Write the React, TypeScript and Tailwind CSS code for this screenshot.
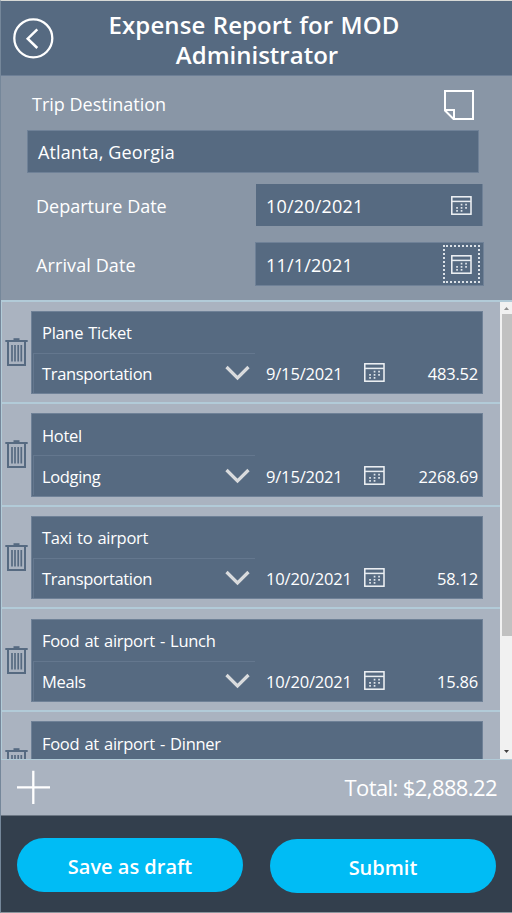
import type { ReactNode } from "react";

type Expense = {
  title: string;
  details?: { category: string; date: string; amount: string };
};

const expenses: Expense[] = [
  { title: "Plane Ticket", details: { category: "Transportation", date: "9/15/2021", amount: "483.52" } },
  { title: "Hotel", details: { category: "Lodging", date: "9/15/2021", amount: "2268.69" } },
  { title: "Taxi to airport", details: { category: "Transportation", date: "10/20/2021", amount: "58.12" } },
  { title: "Food at airport - Lunch", details: { category: "Meals", date: "10/20/2021", amount: "15.86" } },
  { title: "Food at airport - Dinner" },
];

function CalendarIcon() {
  return (
    <svg width="21" height="19" viewBox="0 0 21 19" fill="none" className="block shrink-0">
      <rect x="0.8" y="0.8" width="19.2" height="17.4" stroke="#f2f5f7" strokeWidth="1.5" />
      <path d="M1 5.4H20" stroke="#e9edf1" strokeWidth="1.5" />
      <path
        d="M9.7 8.6h1.7M14.2 8.6h1.7M5.2 11.8h1.7M9.7 11.8h1.7M14.2 11.8h1.7M5.2 14.8h1.7M9.7 14.8h1.7"
        stroke="#dfe5ea"
        strokeWidth="1.7"
      />
    </svg>
  );
}

function TrashIcon() {
  return (
    <svg width="23" height="29" viewBox="0 0 23 29" fill="none" stroke="#566a81" className="block">
      <path d="M8.5 1.2H14.5" strokeWidth="2" />
      <path d="M0.3 3H22.7" strokeWidth="2" />
      <path d="M3 4V27H20V4" strokeWidth="2" />
      <path d="M7 7V23.5M10 7V23.5M13.2 7V23.5M16.3 7V23.5" strokeWidth="1.7" />
    </svg>
  );
}

function DateField({ value, children }: { value: string; children: ReactNode }) {
  return (
    <>
      <span className="pt-[2px] text-[18px] tracking-[0.2px]">{value}</span>
      {children}
    </>
  );
}

function ExpenseRow({ item }: { item: Expense }) {
  return (
    <div className="flex h-[102.7px] shrink-0 border-b-2 border-[#b2cbd8] pt-[9.2px] pl-[3px]">
      <div className="w-[26px] pt-[27px]">
        <TrashIcon />
      </div>
      <div className="flex h-[83.3px] w-[452px] flex-col border border-[#6f8197] bg-[#566a81] text-[16.5px] text-white">
        <div className="flex h-[41px] items-center pt-[2.4px] pl-[10px] tracking-[-0.3px] [word-spacing:1.2px]">
          {item.title}
        </div>
        {item.details && (
          <div className="flex h-[40px]">
            <div className="ml-px flex w-[222px] items-center border-t border-l border-[#64778e] pl-[8px]">
              <span className="w-[184px] pt-[2.5px] tracking-[-0.35px]">{item.details.category}</span>
              <svg width="25" height="16" viewBox="0 0 25 16" fill="none" className="-ml-px shrink-0">
                <path d="M1.5 2L12.5 13L23.5 2" stroke="#d9dbdd" strokeWidth="3.2" />
              </svg>
            </div>
            <div className="flex w-[138px] items-center pl-[11px]">
              <span className="w-[86px] pt-[3.5px] tracking-[-0.18px] whitespace-nowrap">{item.details.date}</span>
              <div className="ml-[12px]">
                <CalendarIcon />
              </div>
            </div>
            <div className="flex flex-1 items-center justify-end pt-[3.5px] pr-[4px] tracking-[-0.2px]">
              {item.details.amount}
            </div>
          </div>
        )}
      </div>
    </div>
  );
}

export default function App() {
  return (
    <div className="flex h-[913px] w-[512px] flex-col overflow-hidden border-t border-b border-l border-t-[#d7d9d6] border-b-[#8d969e] border-l-[#75879a] bg-[#8996a6] font-['Open_Sans','Noto_Sans',sans-serif] text-white">
      <header className="flex h-[75px] shrink-0 border-b border-[#6d7f96] bg-[#566a81]">
        <div className="w-[75px] pt-[17px] pl-3">
          <svg width="41" height="41" viewBox="0 0 41 41" fill="none" stroke="white">
            <circle cx="20.3" cy="20.3" r="19" strokeWidth="2.3" />
            <path d="M24.3 11.3L14.7 20.7L24.3 30" strokeWidth="2.5" />
          </svg>
        </div>
        <h1 className="w-[361px] pt-[9px] text-center text-[24px] leading-[30px] font-semibold">
          <span className="-ml-[5px] block tracking-[0.1px] [word-spacing:1px]">Expense Report for MOD</span>
          <span className="block pl-px">Administrator</span>
        </h1>
      </header>

      <section className="flex h-[224px] shrink-0 flex-col">
        <div className="flex h-[54px] justify-between pr-[38px] pl-[31px]">
          <span className="pt-[15px] text-[18px] leading-[27px]">Trip Destination</span>
          <svg width="30" height="30" viewBox="0 0 30 30" fill="none" stroke="white" className="mt-[14px]">
            <path d="M1 1H29V29H9.5L1 20.5Z" strokeWidth="2" />
            <path d="M1 20H10V29" strokeWidth="2" />
          </svg>
        </div>
        <div className="ml-[26px] flex h-[43px] w-[452px] shrink-0 items-center border border-[#6f8197] bg-[#566a81] pt-[2px] pl-[10px] text-[18px] tracking-[0.13px]">
          Atlanta, Georgia
        </div>
        <div className="mt-[11px] flex h-[42px] shrink-0 pl-[35px]">
          <span className="w-[220px] pt-[9px] text-[18px] leading-[27px]">Departure Date</span>
          <div className="flex w-[227px] items-center justify-between border-r border-[#6f8197] bg-[#566a81] pr-[10px] pl-[10px]">
            <DateField value="10/20/2021">
              <CalendarIcon />
            </DateField>
          </div>
        </div>
        <div className="mt-4 flex h-[44px] shrink-0 pl-[35px]">
          <span className="w-[219px] pt-[10px] text-[18px] leading-[27px] tracking-[0.1px]">Arrival Date</span>
          <div className="flex w-[229px] items-center justify-between border border-[#6f8197] bg-[#566a81] pr-[3px] pl-[10px]">
            <DateField value="11/1/2021">
              <div className="flex h-[38px] w-[37px] items-center justify-center border-2 border-dotted border-[#dce2e8]">
                <CalendarIcon />
              </div>
            </DateField>
          </div>
        </div>
      </section>

      <section className="flex h-[460px] shrink-0 overflow-hidden border-t-2 border-b border-l border-[#b2cbd8] bg-[#aab3c0]">
        <div className="-mt-[0.6px] flex w-[498px] flex-col overflow-hidden">
          {expenses.map((item) => (
            <ExpenseRow key={item.title} item={item} />
          ))}
        </div>
        <div className="flex w-[12px] flex-col justify-between bg-[#f1f1f1]">
          <div>
            <div className="flex h-[12px] items-center justify-center">
              <svg width="5" height="3" viewBox="0 0 5 3">
                <path d="M0 3L2.5 0L5 3Z" fill="#8f8f8f" />
              </svg>
            </div>
            <div className="ml-[2px] h-[322px] bg-[#c1c1c1]" />
          </div>
          <div className="flex h-[15px] items-center justify-center">
            <svg width="5" height="3" viewBox="0 0 5 3">
              <path d="M0 0L2.5 3L5 0Z" fill="#404040" />
            </svg>
          </div>
        </div>
      </section>

      <section className="flex h-[56px] shrink-0 justify-between border-b border-[#6c7784] bg-[#aab3c0] pr-[15px] pl-4">
        <svg width="33" height="34" viewBox="0 0 33 34" className="mt-[10px]" stroke="white" fill="none">
          <path d="M0 17.3H33M16.3 0.7V34" strokeWidth="2.3" />
        </svg>
        <span className="pt-[11px] text-[22px] leading-[32px] tracking-[-0.6px]">Total: $2,888.22</span>
      </section>

      <footer className="flex flex-1 bg-[#333f4d] pt-[22px] pl-4">
        <button className="h-[54px] w-[226px] rounded-full bg-[#00bcf5] pt-[3px] text-[20px] font-semibold">
          Save as draft
        </button>
        <button className="mt-px ml-[27px] h-[54px] w-[226px] rounded-full bg-[#00bcf5] pt-[3px] text-[20px] font-semibold">
          Submit
        </button>
      </footer>
    </div>
  );
}
